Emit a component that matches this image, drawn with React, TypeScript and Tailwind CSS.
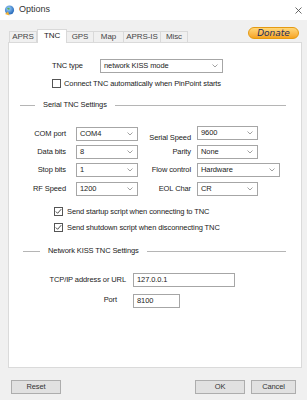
import React from 'react';

const Chevron = () => (
  <svg width="6" height="4" viewBox="0 0 6 4" className="shrink-0">
    <polyline points="0.5,0.5 3,3 5.5,0.5" fill="none" stroke="#8a8a8a" strokeWidth="0.8" />
  </svg>
);

const Select = ({ value, w }: { value: string; w: string }) => (
  <div className={`${w} h-[14px] border border-[#a6a6a6] bg-white flex items-center justify-between pl-[3px] pr-[4px]`}>
    <span className="leading-none">{value}</span>
    <Chevron />
  </div>
);

const Check = ({ checked }: { checked?: boolean }) => (
  <div className="w-[9px] h-[9px] border border-[#555] bg-white flex items-center justify-center shrink-0">
    {checked && (
      <svg width="7" height="7" viewBox="0 0 7 7">
        <polyline points="0.8,3.5 2.6,5.3 6.2,1.2" fill="none" stroke="#333" strokeWidth="0.9" />
      </svg>
    )}
  </div>
);

const Section = ({ title, lead }: { title: string; lead: string }) => (
  <div className="flex items-center mr-[15px] whitespace-nowrap">
    <div className={`${lead} h-px bg-[#b5b5b5]`} />
    <span className="mx-[8px] leading-none">{title}</span>
    <div className="flex-1 h-px bg-[#b5b5b5]" />
  </div>
);

const tabs = ['APRS', 'TNC', 'GPS', 'Map', 'APRS-IS', 'Misc'];
const tabW = ['w-[28px]', 'w-[30px]', 'w-[27px]', 'w-[30px]', 'w-[37px]', 'w-[27px]'];

const App = () => {
  return (
    <div className="w-[307px] h-[400px] bg-[#f0f0f0] flex flex-col text-[7.5px] tracking-[-0.1px] text-[#222]" style={{ fontFamily: '"Liberation Sans", Arial, sans-serif' }}>
      {/* title bar */}
      <div className="h-[20px] bg-white flex items-center pl-[4px] pr-[4px]">
        <svg width="11" height="11" viewBox="0 0 11 11">
          <defs>
            <radialGradient id="g" cx="40%" cy="35%" r="70%">
              <stop offset="0" stopColor="#9ed3ff" />
              <stop offset="1" stopColor="#1b5fb3" />
            </radialGradient>
          </defs>
          <circle cx="5.5" cy="5" r="4.6" fill="url(#g)" />
          <path d="M3 3 Q5 2 6 4 Q4 6 3 3Z" fill="#5fb04a" />
          <path d="M1 9 L4 6.5 L5.5 10.5 Z" fill="#f2b233" />
        </svg>
        <span className="ml-[4px] text-[9px] tracking-normal text-[#333]">Options</span>
        <svg width="7" height="7" viewBox="0 0 7 7" className="ml-auto mr-[1px]">
          <path d="M0.5 0.5 L6.5 6.5 M6.5 0.5 L0.5 6.5" stroke="#444" strokeWidth="0.8" />
        </svg>
      </div>

      {/* tab strip */}
      <div className="h-[22px] flex items-end pl-[9px] pr-[8px] relative">
        {tabs.map((t, i) =>
          t === 'TNC' ? (
            <div key={t} className={`${tabW[i]} h-[14px] bg-white border border-b-0 border-[#d9d9d9] flex items-center justify-center pb-[2px] -mb-px relative z-10 text-[8px]`}>
              {t}
            </div>
          ) : (
            <div key={t} className={`${tabW[i]} h-[11px] bg-[#f0f0f0] border border-b-0 border-l-0 first:border-l border-[#d9d9d9] flex items-center justify-center text-[#444] text-[8px]`}>
              {t}
            </div>
          )
        )}
        <div className="absolute right-[8px] top-[7px] w-[51px] h-[12px] rounded-full border border-[#e59a12] bg-gradient-to-b from-[#ffd777] to-[#f6a41c] flex items-center justify-center">
          <span className="italic text-[9px] tracking-normal text-[#1e2c5c] leading-none" style={{ fontFamily: '"DejaVu Sans", sans-serif' }}>Donate</span>
        </div>
      </div>

      {/* panel */}
      <div className="mx-[8px] w-[294px] h-[326px] bg-white border border-[#dadada] flex flex-col">
        <div className="flex items-center mt-[16px]">
          <span className="ml-[43px] w-[48px]">TNC type</span>
          <Select value="network KISS mode" w="w-[123px]" />
        </div>
        <div className="flex items-center mt-[5px] ml-[43px]">
          <Check />
          <span className="ml-[3px]">Connect TNC automatically when PinPoint starts</span>
        </div>

        <div className="mt-[12px]">
          <Section title="Serial TNC Settings" lead="ml-[11px] w-[15px]" />
        </div>

        <div className="flex flex-col gap-[4px] mt-[18px]">
          <div className="flex items-center">
            <span className="w-[57px] text-right">COM port</span>
            <div className="ml-[10px]"><Select value="COM4" w="w-[62px]" /></div>
            <span className="w-[53px] text-right relative top-[4px]">Serial Speed</span>
            <div className="ml-[6px] relative -top-[1px]"><Select value="9600" w="w-[61px]" /></div>
          </div>
          <div className="flex items-center">
            <span className="w-[57px] text-right">Data bits</span>
            <div className="ml-[10px]"><Select value="8" w="w-[62px]" /></div>
            <span className="w-[53px] text-right">Parity</span>
            <div className="ml-[6px]"><Select value="None" w="w-[61px]" /></div>
          </div>
          <div className="flex items-center">
            <span className="w-[57px] text-right">Stop bits</span>
            <div className="ml-[10px]"><Select value="1" w="w-[62px]" /></div>
            <span className="w-[53px] text-right">Flow control</span>
            <div className="ml-[6px]"><Select value="Hardware" w="w-[83px]" /></div>
          </div>
          <div className="flex items-center mt-[1px]">
            <span className="w-[57px] text-right">RF Speed</span>
            <div className="ml-[10px]"><Select value="1200" w="w-[62px]" /></div>
            <span className="w-[53px] text-right">EOL Char</span>
            <div className="ml-[6px]"><Select value="CR" w="w-[61px]" /></div>
          </div>
        </div>

        <div className="flex flex-col gap-[5px] mt-[10px] ml-[45px]">
          <div className="flex items-center">
            <Check checked />
            <span className="ml-[4px]">Send startup script when connecting to TNC</span>
          </div>
          <div className="flex items-center">
            <Check checked />
            <span className="ml-[4px]">Send shutdown script when disconnecting TNC</span>
          </div>
        </div>

        <div className="mt-[14px]">
          <Section title="Network KISS TNC Settings" lead="ml-[14px] w-[17px]" />
        </div>

        <div className="flex items-center mt-[18px]">
          <span className="w-[117px] text-right">TCP/IP address or URL</span>
          <div className="ml-[7px] w-[102px] h-[14px] border border-[#a6a6a6] flex items-center pl-[3px]">127.0.0.1</div>
        </div>
        <div className="flex items-start mt-[7px]">
          <span className="w-[108px] text-right">Port</span>
          <div className="ml-[16px] w-[47px] h-[14px] border border-[#a6a6a6] flex items-center pl-[3px]">8100</div>
        </div>
      </div>

      {/* bottom buttons */}
      <div className="flex items-center mt-[12px] px-[11px]">
        <button className="w-[50px] h-[14px] bg-[#e1e1e1] border border-[#adadad] flex items-center justify-center text-[#333]">Reset</button>
        <button className="ml-auto w-[50px] h-[14px] bg-[#e1e1e1] border border-[#adadad] flex items-center justify-center text-[#333]">OK</button>
        <button className="ml-[6px] w-[45px] h-[14px] bg-[#e1e1e1] border border-[#adadad] flex items-center justify-center text-[#333]">Cancel</button>
      </div>
    </div>
  );
};

export default App;
